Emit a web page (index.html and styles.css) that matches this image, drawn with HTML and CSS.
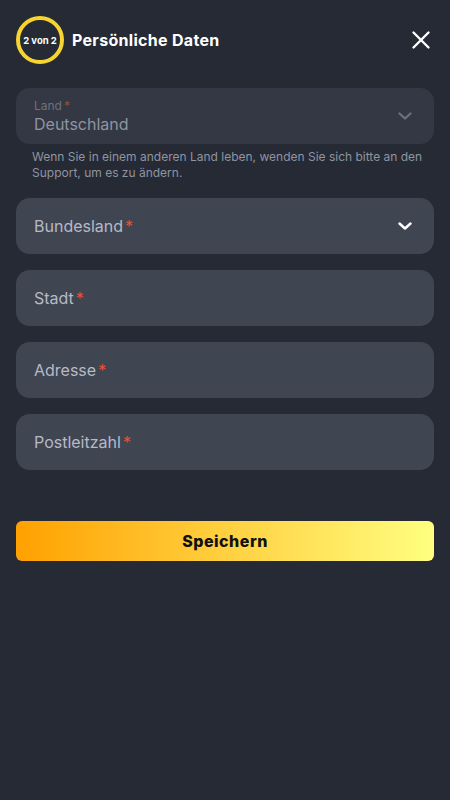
FILE: index.html
```html
<!DOCTYPE html>
<html lang="de">
<head>
    <meta charset="UTF-8">
    <meta name="viewport" content="width=device-width, initial-scale=1.0">
    <title>Persönliche Daten</title>
    <link rel="stylesheet" href="styles.css">
</head>
<body>
    <div class="container">
        <div class="header">
            <div class="step">2 von 2</div>
            <h2 class="title">Persönliche Daten</h2>
            <button class="close" type="button" aria-label="Schließen">
                <svg width="20" height="20" viewBox="0 0 20 20"><path d="M2.5 2.5L17.5 17.5M17.5 2.5L2.5 17.5" stroke="#fff" stroke-width="2.4" stroke-linecap="round"/></svg>
            </button>
        </div>
        <form>
            <div class="field disabled">
                <div class="field-text">
                    <span class="small-label">Land<span class="req">*</span></span>
                    <span class="value">Deutschland</span>
                </div>
                <svg class="chevron" width="14" height="8" viewBox="0 0 14 8"><path d="M1.5 1.5L7 6.5L12.5 1.5" fill="none" stroke="#6c717d" stroke-width="2.2" stroke-linecap="round" stroke-linejoin="round"/></svg>
            </div>
            <p class="hint">Wenn Sie in einem anderen Land leben, wenden Sie sich bitte an den Support, um es zu ändern.</p>
            <div class="field">
                <span class="label">Bundesland<span class="req">*</span></span>
                <svg class="chevron" width="14" height="8" viewBox="0 0 14 8"><path d="M1.5 1.5L7 6.5L12.5 1.5" fill="none" stroke="#fff" stroke-width="2.4" stroke-linecap="round" stroke-linejoin="round"/></svg>
            </div>
            <div class="field">
                <span class="label">Stadt<span class="req">*</span></span>
            </div>
            <div class="field">
                <span class="label">Adresse<span class="req">*</span></span>
            </div>
            <div class="field">
                <span class="label">Postleitzahl<span class="req">*</span></span>
            </div>
            <button class="save" type="button">Speichern</button>
        </form>
    </div>
</body>
</html>
```

FILE: styles.css
```css
body {
    margin: 0;
    background-color: #262a35;
    font-family: Inter, "Noto Sans", sans-serif;
    color: #fff;
}
.container {
    padding: 16px;
}
.header {
    display: flex;
    align-items: center;
    height: 48px;
    margin-bottom: 24px;
}
.step {
    box-sizing: border-box;
    width: 48px;
    height: 48px;
    border: 4px solid #f7d531;
    border-radius: 50%;
    display: flex;
    align-items: center;
    justify-content: center;
    font-size: 9.5px;
    font-weight: 700;
    white-space: nowrap;
}
.title {
    flex: 1;
    margin: 0 0 0 8px;
    font-size: 16px;
    font-weight: 700;
    letter-spacing: 0.3px;
}
.close {
    border: none;
    background: none;
    padding: 0;
    margin-right: 3px;
    width: 20px;
    height: 20px;
    display: flex;
}
.field {
    height: 56px;
    box-sizing: border-box;
    padding: 0 22px 0 18px;
    border-radius: 14px;
    background-color: #404552;
    display: flex;
    align-items: center;
    justify-content: space-between;
    margin-bottom: 16px;
}
.field.disabled {
    background-color: #343844;
    margin-bottom: 5px;
}
.field-text {
    display: flex;
    flex-direction: column;
    padding-top: 2px;
}
.small-label {
    font-size: 12px;
    color: #6c717d;
    line-height: 14px;
}
.value {
    font-size: 16px;
    color: #8f94a0;
    line-height: 22px;
}
.label {
    font-size: 16px;
    color: #b6bac6;
}
.req {
    color: #e5533b;
    margin-left: 2px;
}
.small-label .req {
    color: #a3493a;
}
.hint {
    margin: 0 0 17px 16px;
    font-size: 12px;
    line-height: 16px;
    color: #8f94a0;
}
.save {
    display: block;
    width: 100%;
    height: 40px;
    margin-top: 51px;
    border: none;
    border-radius: 6px;
    background: linear-gradient(90deg, #ffa100, #ffff80);
    font-family: Inter, "Noto Sans", sans-serif;
    font-size: 16px;
    font-weight: 800;
    color: #111;
    letter-spacing: 0.5px;
}
```
